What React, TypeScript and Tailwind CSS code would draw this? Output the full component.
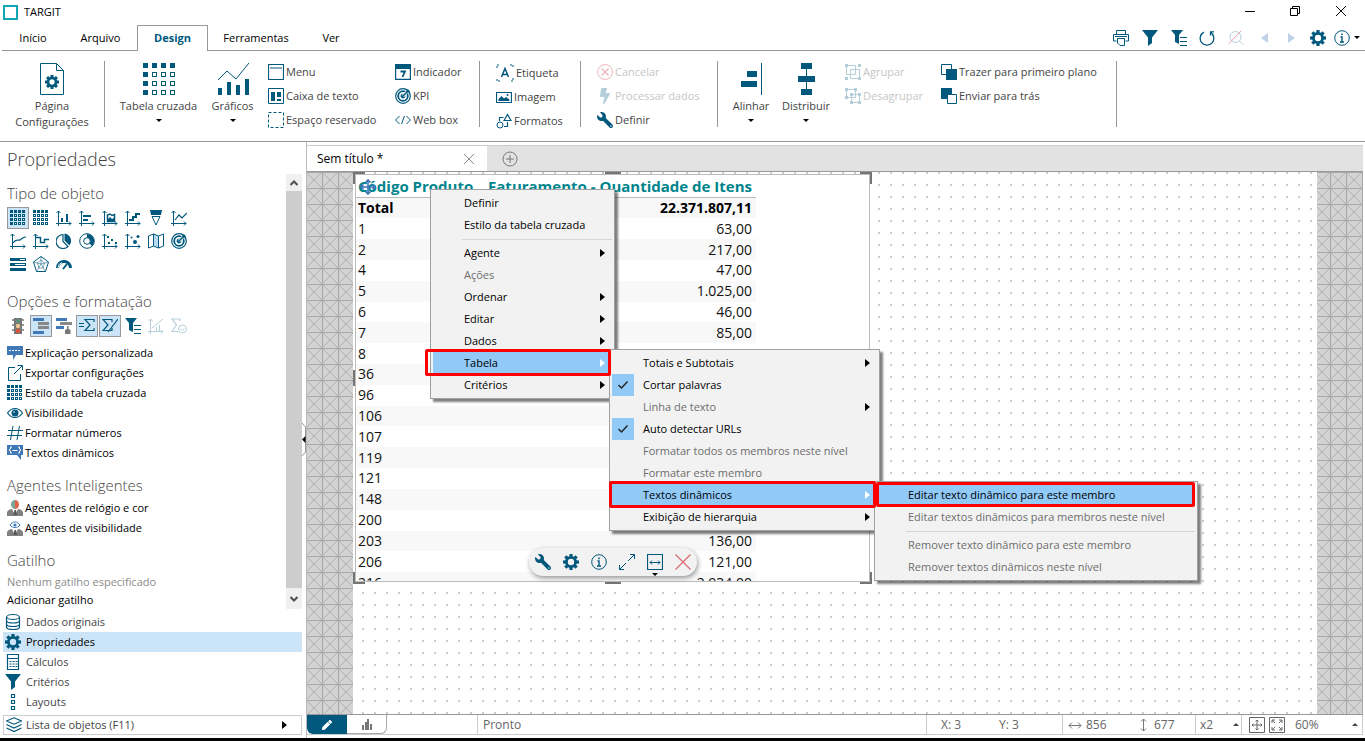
import { useState } from "react";
import type { ReactNode } from "react";
import { FaWrench, FaBolt, FaPen } from "react-icons/fa";

const BLUE = "#00587c";

function Svg({ children, size = 16, color = BLUE }: { children: ReactNode; size?: number; color?: string }) {
  return (
    <svg
      width={size}
      height={size}
      viewBox={`0 0 ${size} ${size}`}
      fill="none"
      stroke={color}
      strokeWidth="1"
      className="shrink-0"
      aria-hidden="true"
    >
      {children}
    </svg>
  );
}

function Gear({ size = 16, color = BLUE }: { size?: number; color?: string }) {
  return (
    <svg width={size} height={size} viewBox="-8 -8 16 16" fill={color} className="shrink-0" aria-hidden="true">
      <circle r="4.6" fill="none" stroke={color} strokeWidth="2.8" />
      {[0, 45, 90, 135, 180, 225, 270, 315].map((a) => (
        <rect key={a} x="-1.6" y="-8" width="3.2" height="3" transform={`rotate(${a})`} />
      ))}
    </svg>
  );
}

function GridIcon({ leftFilled = true }: { leftFilled?: boolean }) {
  return (
    <Svg>
      {[0, 1, 2, 3].map((r) =>
        [0, 1, 2, 3].map((c) => {
          const solid = r === 0 || (leftFilled && c === 0);
          return (
            <rect
              key={`${r}-${c}`}
              x={c * 4 + 0.5}
              y={r * 4 + 0.5}
              width="2"
              height="2"
              fill={solid ? BLUE : "none"}
            />
          );
        })
      )}
    </Svg>
  );
}

function BigGrid() {
  return (
    <Svg size={32}>
      {[0, 1, 2, 3].map((r) =>
        [0, 1, 2, 3].map((c) => (
          <rect
            key={`${r}-${c}`}
            x={c * 9 + 0.5}
            y={r * 9 + 0.5}
            width="4"
            height="4"
            fill={r === 0 || c === 0 ? BLUE : "none"}
          />
        ))
      )}
    </Svg>
  );
}

function Axes({ children }: { children: ReactNode }) {
  return (
    <Svg>
      <path d="M2.500 16V1M0.500 3l2-2 2 2M0 13.500h15M13 11.500l2 2-2 2" />
      {children}
    </Svg>
  );
}

function Filter() {
  return (
    <Svg>
      <path d="M0 0h16L10 7.500V13l-4 3V7.500z" fill={BLUE} stroke="none" />
    </Svg>
  );
}

function FilterLines() {
  return (
    <Svg>
      <path d="M0 0h12L8 5v9l-4-2V5z" fill={BLUE} stroke="none" />
      <path d="M9 7.500h7M9 11.500h7M9 15.500h7" />
    </Svg>
  );
}

function Target() {
  return (
    <Svg>
      <circle cx="8" cy="8" r="7.300" strokeWidth="1.200" />
      <circle cx="8" cy="8" r="4.800" strokeWidth="1.800" />
      <circle cx="8" cy="8" r="2" fill={BLUE} />
      <path d="M8 8l7-7" stroke="#fff" strokeWidth="3" />
      <path d="M8 8l6-6M12 1v3h3" strokeWidth="1.500" />
    </Svg>
  );
}

function Info({ size = 16 }: { size?: number }) {
  return (
    <svg width={size} height={size} viewBox="0 0 16 16" fill="none" stroke={BLUE} className="shrink-0" aria-hidden="true">
      <circle cx="8" cy="8" r="7.300" />
      <path d="M8 3.500v1.800M6.500 7H8v5M6 12h4" strokeWidth="1.400" />
    </svg>
  );
}

function Sigma({ shift = 0 }: { shift?: number }) {
  return <path d={`M${10 + shift} 4V1.500H${shift + 1}L${6 + shift} 7l-5 5.500h9V10`} strokeWidth="1.200" />;
}

function Caret({ up = false }: { up?: boolean }) {
  return (
    <svg width="6" height="3" viewBox="0 0 6 3" className="shrink-0" aria-hidden="true">
      <path d={up ? "M0 3h6L3 0z" : "M0 0h6L3 3z"} fill={up ? "#444" : "#000"} />
    </svg>
  );
}

function RightArrow({ color = "#000" }: { color?: string }) {
  return (
    <svg width="5" height="8" viewBox="0 0 5 8" className="shrink-0" aria-hidden="true">
      <path d="M0 0v8l5-4z" fill={color} />
    </svg>
  );
}

const tabs = ["Início", "Arquivo", "Design", "Ferramentas", "Ver"];
const tabWidths = ["w-[62px]", "w-[73px]", "w-[71px]", "w-[96px]", "w-[54px]"];

function TitleBar() {
  return (
    <header className="flex h-[25px] shrink-0 items-center justify-between pr-px pl-[3px]">
      <div className="flex items-center gap-1.5">
        <span className="size-[15px] border-2 border-[#12a5b5]" />
        <h1 className="text-[11px]">TARGIT</h1>
      </div>
      <div className="flex items-center pb-1 text-black">
        <button aria-label="Minimizar" className="flex h-5 w-[45px] items-center justify-center">
          <Svg size={10} color="#000"><path d="M0 5.500h10" /></Svg>
        </button>
        <button aria-label="Restaurar" className="flex h-5 w-[45px] items-center justify-center">
          <Svg size={10} color="#000"><path d="M0.500 2.500h7v7h-7zM2.500 2V0.500h7v7H8" /></Svg>
        </button>
        <button aria-label="Fechar" className="flex h-5 w-[47px] items-center justify-center">
          <Svg size={10} color="#000"><path d="M0 0l10 10M10 0L0 10" /></Svg>
        </button>
      </div>
    </header>
  );
}

const quickTools: [string, string, ReactNode][] = [
  ["Imprimir", "w-[29px]", <Svg key="i"><path d="M3.500 4V0.500h9V4M3.500 11h-3V4.500h15V11h-3M4.500 8.500h7v7H7l-2.500-2.500zM2 6.500h12" /></Svg>],
  ["Filtrar", "w-[29px]", <Filter key="i" />],
  ["Critérios", "w-[29px]", <FilterLines key="i" />],
  ["Atualizar", "w-[28px]", <Svg key="i"><path d="M11 2.200a6.800 6.800 0 1 1-6 0M11.500 5.500V1.800h3.500" strokeWidth="1.300" /></Svg>],
  ["Localizar", "w-[30px]", <Svg key="i" color="#b5cfda"><circle cx="7.500" cy="7" r="5.500" /><path d="M11.500 11l4 4" /><path d="M0.500 14L13 1" stroke="#ee9fae" /></Svg>],
  ["Voltar", "w-[27px]", <Svg key="i"><path d="M11 3v10L4 8z" fill="#bfd2e8" stroke="none" /></Svg>],
  ["Avançar", "w-[26px]", <Svg key="i"><path d="M5 3v10l7-5z" fill="#bfd2e8" stroke="none" /></Svg>],
  ["Opções", "w-[28px]", <Gear key="i" />],
  ["Informação", "w-[20px]", <Info key="i" />],
];

function TabBar() {
  return (
    <nav className="flex h-[26px] shrink-0 pl-0.5 text-[11px] text-black">
      <div className="flex">
        {tabs.map((t, i) => (
          <button
            key={t}
            className={`${tabWidths[i]} ${
              t === "Design"
                ? "border border-b-0 border-[#999] font-bold text-[#00587c]"
                : "border-b border-[#999] pt-0.5"
            }`}
          >
            {t}
          </button>
        ))}
      </div>
      <div className="flex flex-1 items-center justify-end border-b border-[#999] pr-[5px]">
        {quickTools.map(([label, width, icon]) => (
          <button key={label} aria-label={label} className={`flex justify-center ${width}`}>
            {icon}
          </button>
        ))}
        <span className="pl-0.5"><Caret /></span>
      </div>
    </nav>
  );
}

function Separator() {
  return <div className="mt-px h-[66px] w-px shrink-0 bg-[#999]" />;
}

function BigButton({ icon, label, width, caret = true }: { icon: ReactNode; label: string; width: string; caret?: boolean }) {
  return (
    <button className={`flex shrink-0 flex-col items-center pt-[3px] leading-4 ${width}`}>
      {icon}
      <span className="mt-[3px] whitespace-pre-line">{label}</span>
      {caret && <span className="mt-0.5 flex h-2 items-center"><Caret /></span>}
    </button>
  );
}

function RibbonColumn({ items, width }: { items: [string, ReactNode, boolean?][]; width: string }) {
  return (
    <div className={`shrink-0 ${width}`}>
      {items.map(([label, icon, disabled]) => (
        <button
          key={label}
          disabled={disabled}
          className="flex h-6 items-center gap-0.5 whitespace-nowrap disabled:text-[#c6c6c6]"
        >
          {icon}
          {label}
        </button>
      ))}
    </div>
  );
}

function Ribbon() {
  return (
    <section className="flex h-[91px] shrink-0 overflow-hidden border-b border-[#999] pt-[9px] text-[11px] text-[#444]">
      <BigButton
        width="w-[104px]"
        caret={false}
        label={"Página\nConfigurações"}
        icon={
          <Svg size={32}>
            <path d="M4.500 0.500h16l7 7v24h-23zM20.500 0.500v7h7" />
            <g transform="translate(16 19)" fill={BLUE} stroke="none">
              <circle r="4" fill="none" stroke={BLUE} strokeWidth="2.600" />
              {[0, 45, 90, 135, 180, 225, 270, 315].map((a) => (
                <rect key={a} x="-1.500" y="-7" width="3" height="3" transform={`rotate(${a})`} />
              ))}
            </g>
          </Svg>
        }
      />
      <Separator />
      <BigButton width="w-[107px]" label="Tabela cruzada" icon={<BigGrid />} />
      <BigButton
        width="w-[41px]"
        label="Gráficos"
        icon={
          <Svg size={32}>
            <path d="M1 17l9-9 9 8L32 0" />
            <path d="M1 25h4v7H1zM10 19h4v13h-4zM19 22h4v10h-4zM28 16h4v16h-4z" fill={BLUE} stroke="none" />
          </Svg>
        }
      />
      <RibbonColumn
        width="ml-[15px] w-[127px]"
        items={[
          ["Menu", <Svg key="i"><path d="M0.500 0.500h15v15h-15zM2 4h12" strokeWidth="1.200" /></Svg>],
          ["Caixa de texto", <Svg key="i"><path d="M0.500 0.500h15v15h-15z" /><path d="M3 4h4v9H3zM9 4h4v5H9zM9 11h4v2H9z" fill={BLUE} stroke="none" /></Svg>],
          ["Espaço reservado", <Svg key="i"><path d="M0.500 0.500h15v15h-15z" strokeDasharray="3 2" /></Svg>],
        ]}
      />
      <RibbonColumn
        width="w-[84px]"
        items={[
          ["Indicador", <Svg key="i"><path d="M0.500 0.500h15v15h-15z" strokeWidth="1.400" /><path d="M0 0h16v5H0z" fill={BLUE} stroke="none" /><path d="M5.500 7.500H10L7.500 13" strokeWidth="1.800" /></Svg>],
          ["KPI", <Target key="i" />],
          ["Web box", <Svg key="i"><path d="M4.500 4L0.500 8l4 4M11.500 4l4 4-4 4M9.500 4l-3 8" /></Svg>],
        ]}
      />
      <Separator />
      <RibbonColumn
        width="mt-px ml-4 w-[84px]"
        items={[
          ["Etiqueta", <Svg key="i" size={18}><path d="M1 4V1h3M14 1h3v3M17 14v3h-3M4 17H1v-3" strokeDasharray="2 1" /><path d="M5.500 13L9 4.500l3.500 8.500M6.500 10.500h5" strokeWidth="1.500" /></Svg>],
          ["Imagem", <Svg key="i"><path d="M0.500 3.500h15v10h-15z" strokeWidth="1.200" /><path d="M2.500 12V10l3-3 2.500 2.500L10 8l3.500 2.500V12z" fill={BLUE} stroke="none" /><circle cx="11.500" cy="6" r="1" fill={BLUE} stroke="none" /></Svg>],
          ["Formatos", <Svg key="i"><circle cx="4" cy="12" r="3" /><path d="M3.500 8V4.500h4M11.500 9v4.500H8M8 7.500L11.500 1.500l3.500 6z" strokeWidth="1.200" /></Svg>],
        ]}
      />
      <Separator />
      <RibbonColumn
        width="ml-4 w-[120px]"
        items={[
          ["Cancelar", <Svg key="i" color="#eeb6ba"><circle cx="8" cy="8" r="7.400" /><path d="M4.500 4.500l7 7M11.500 4.500l-7 7" strokeWidth="1.400" /></Svg>, true],
          ["Processar dados", <FaBolt key="i" className="size-4 text-[#b5cfda]" />, true],
          ["Definir", <FaWrench key="i" className="size-4 -scale-x-100 text-[#00587c]" />],
        ]}
      />
      <Separator />
      <BigButton
        width="ml-1 w-[58px]"
        label="Alinhar"
        icon={<Svg size={32}><path d="M12 8h10v6H12zM6 18h16v6H6z" fill={BLUE} stroke="none" /><path d="M26.500 0v32" /></Svg>}
      />
      <BigButton
        width="w-[52px]"
        label="Distribuir"
        icon={<Svg size={32}><path d="M16.500 0v32" /><path d="M11 0h11v6H11zM8 13h17v6H8zM11 26h11v6H11z" fill={BLUE} stroke="none" /></Svg>}
      />
      <RibbonColumn
        width="ml-[13px] w-24"
        items={[
          ["Agrupar", <Svg key="i" color="#b5cfda"><path d="M1.500 1.500h9v9h-9zM5.500 5.500h9v9h-9z" /><path d="M0 0h3v3H0zM13 0h3v3h-3zM0 13h3v3H0zM13 13h3v3h-3z" fill="#b5cfda" stroke="none" /></Svg>, true],
          ["Desagrupar", <Svg key="i" color="#b5cfda"><path d="M1.500 1.500h9v8h-9zM6.500 6.500h8v8h-8z" /><path d="M0 0h3v3H0zM9 0h3v3H9zM0 8h3v3H0zM5 5h3v3H5zM13 5h3v3h-3zM5 13h3v3H5zM13 13h3v3h-3z" fill="#b5cfda" stroke="none" /></Svg>, true],
        ]}
      />
      <RibbonColumn
        width="w-[175px]"
        items={[
          ["Trazer para primeiro plano", <Svg key="i"><path d="M0.500 0.500h10v10h-10z" /><path d="M5 5h11v11H5z" fill={BLUE} stroke="none" /></Svg>],
          ["Enviar para trás", <Svg key="i"><path d="M0 0h11v11H0z" fill={BLUE} stroke="none" /><path d="M6.500 6.500h9v9h-9z" fill="#fff" /></Svg>],
        ]}
      />
      <Separator />
    </section>
  );
}

const objectTypes: [string, ReactNode][] = [
  ["Tabela cruzada", <GridIcon key="i" />],
  ["Tabela", <GridIcon key="i" leftFilled={false} />],
  ["Colunas", <Axes key="i"><path d="M6 12V8M11 12V4" strokeWidth="2" /></Axes>],
  ["Barras", <Axes key="i"><path d="M4 6h8M4 10h5" strokeWidth="2" /></Axes>],
  ["Área", <Axes key="i"><path d="M5.500 11.500V5l2.500-1 2 1.500 2.500-1v7z" strokeWidth="1.500" /><path d="M6 9l2-2 2 2 2-1v3H6z" fill={BLUE} stroke="none" /></Axes>],
  ["Cascata", <Axes key="i"><path d="M4 10h4V7h3V4h4" strokeWidth="2" /></Axes>],
  ["Funil", <Svg key="i"><path d="M2 0h12l-1 5H3z" fill={BLUE} stroke="none" /><path d="M4 6.500h8L8 15z" /></Svg>],
  ["Linhas", <Axes key="i"><path d="M4 10l4-5 3 3 5-5" strokeWidth="1.200" /></Axes>],
  ["Curvas", <Axes key="i"><path d="M3 10c3-5 5-2 7-3s2-3 6-3" strokeWidth="1.200" /></Axes>],
  ["Degraus", <Axes key="i"><path d="M3 4.500h4.500v5h4v-3H16" strokeWidth="1.400" /></Axes>],
  ["Pizza", <Svg key="i"><path d="M7 1.500a7 7 0 1 0 5 12L7 8.500z" strokeWidth="1.200" /><path d="M8.500 0.500A7.500 7.500 0 0 1 13.500 12.500L8.500 7.500z" fill={BLUE} stroke="none" /></Svg>],
  ["Rosca", <Svg key="i"><circle cx="8" cy="8" r="7.300" /><circle cx="8" cy="8" r="3.300" /><path d="M8 2.700A5.300 5.300 0 0 1 11.700 11.700" strokeWidth="3.500" /></Svg>],
  ["Dispersão", <Axes key="i"><path d="M5 3h2v2H5zM9 6h2v2H9zM6 9h2v2H6zM13 9h2v2h-2z" fill={BLUE} stroke="none" /></Axes>],
  ["Bolhas", <Axes key="i"><circle cx="10" cy="9" r="2" fill={BLUE} stroke="none" /><circle cx="6.500" cy="4.500" r="1" fill={BLUE} stroke="none" /><circle cx="13" cy="3.500" r="1.500" fill={BLUE} stroke="none" /></Axes>],
  ["Mapa", <Svg key="i"><path d="M5.500 1l5 2v12l-5-2z" fill="#b9daf3" stroke="none" /><path d="M0.500 3l5-2 5 2 5-2v12l-5 2-5-2-5 2zM5.500 1v12M10.500 3v12" /></Svg>],
  ["Medidor", <Target key="i" />],
  ["Barras de progresso", <Svg key="i"><path d="M0 2h16v3H0zM0 7h16v3H0zM0 12h16v3H0z" fill={BLUE} stroke="none" /><path d="M10 3.500h5M5 8.500h10" stroke="#fff" /></Svg>],
  ["Radar", <Svg key="i"><path d="M8 0.500l7.500 5.500-3 9.500h-9L0.500 6z" /><path d="M8 4l3.500 3-1.500 5H6L4.500 7zM8 0.500V8M15.500 6L8 8l4.500 7.500M3.500 15.500L8 8 0.500 6" strokeWidth="0.500" /></Svg>],
  ["Velocímetro", <Svg key="i"><path d="M1.500 12a6.500 6.500 0 0 1 13 0" strokeWidth="3" /><path d="M2 11.500A6 6 0 0 1 6 6.500" stroke="#fff" /><path d="M7 13l4-5" strokeWidth="2" /></Svg>],
];

const formatOptions: [string, ReactNode][] = [
  ["Semáforo", <Svg key="i"><path d="M4 0h8v16H4z" fill="#777" stroke="none" /><path d="M2 2h12M2 7h12M2 12h12" stroke="#777" strokeWidth="1.500" /><circle cx="8" cy="3" r="2" fill="#5f8f80" stroke="none" /><circle cx="8" cy="8" r="2.200" fill="#f0c690" stroke="none" /><circle cx="8" cy="13" r="2.200" fill="#e0533c" stroke="none" /></Svg>],
  ["Recuar", <Svg key="i"><path d="M0 1.500h11M0 14.500h11" stroke="#4078b8" strokeWidth="3" /><path d="M5 5.500h11M5 9.500h11" stroke="#888" strokeWidth="3" /></Svg>],
  ["Agrupar níveis", <Svg key="i"><path d="M0 1.500h11" stroke="#4078b8" strokeWidth="3" /><path d="M4 5.500h12" stroke="#888" strokeWidth="3" /><path d="M0 9.500h8" stroke="#4078b8" strokeWidth="3" /><path d="M9 16v-4l2-1V8h1.500v3l2 1v4z" fill="#777" stroke="none" /></Svg>],
  ["Totais", <Svg key="i"><path d="M0 5.500h5M0 8.500h5" /><Sigma shift={5} /></Svg>],
  ["Subtotais", <Svg key="i"><Sigma /><path d="M16 1L6 14" strokeWidth="1.200" /></Svg>],
  ["Critérios", <FilterLines key="i" />],
  ["Tendência", <Svg key="i" color="#b5cfda"><path d="M2.500 16V1M0.500 3l2-2 2 2M0 13.500h15M13 11.500l2 2-2 2M4 10l11-9M8.500 13V9M11.500 13V7" /></Svg>],
  ["Soma acumulada", <Svg key="i" color="#b5cfda"><path d="M9 3V1H1l4.500 6L1 13.500h6" strokeWidth="1.200" /><circle cx="11.500" cy="11" r="4" /><path d="M9.500 10.500l2 2 2-2" /></Svg>],
];

function Agent({ children }: { children: ReactNode }) {
  return (
    <Svg>
      <path d="M0 16v-4c1-2 3-3 5-3l3 6 3-6c2 0 4 1 5 3v4z" fill="#808080" stroke="none" />
      <path d="M7.500 10h1.500l1 5H6.500z" fill="#555" stroke="none" />
      {children}
    </Svg>
  );
}

const actions: [string, ReactNode][] = [
  ["Explicação personalizada", <Svg key="i"><path d="M0 1h16v9H9l-3 5v-5H0z" fill="#4078b8" stroke="none" /><path d="M2 5.500h12" stroke="#fff" strokeDasharray="2 1" /></Svg>],
  ["Exportar configurações", <Svg key="i"><path d="M8 2.500H1.500v13h12V9M7 9l8-8M10.500 0.500H15.500V5" /></Svg>],
  ["Estilo da tabela cruzada", <GridIcon key="i" />],
  ["Visibilidade", <Svg key="i"><path d="M0.500 8c4-6 11-6 15 0-4 6-11 6-15 0z" strokeWidth="1.200" /><circle cx="8" cy="8" r="3.500" fill={BLUE} stroke="none" /><circle cx="7" cy="7" r="0.800" fill="#fff" stroke="none" /></Svg>],
  ["Formatar números", <Svg key="i"><path d="M6 1L3.500 15M12.500 1L10 15M1 5.500h15M0 10.500h15" /></Svg>],
  ["Textos dinâmicos", <Svg key="i"><path d="M0 0h16v10h-2v5l-4-5H0z" fill="#4078b8" stroke="none" /><path d="M5 2H3.500v2L2 5l1.500 1v2H5M11 2h1.500v2L14 5l-1.500 1v2H11M5.500 5.500h5" stroke="#fff" /></Svg>],
];

const agents: [string, ReactNode][] = [
  ["Agentes de relógio e cor", <Agent key="i"><path d="M8 0v9a4 4.500 0 0 1 0-9z" fill="#79a898" stroke="none" /><path d="M8 0v9a4 4.500 0 0 0 0-9z" fill="#e0634c" stroke="none" /></Agent>],
  ["Agentes de visibilidade", <Agent key="i"><path d="M3 5c2.500-4 7.500-4 10 0-2.500 3.500-7.500 3.500-10 0z" fill="#fff" stroke="#4078b8" /><circle cx="8" cy="5" r="1.600" fill="#4078b8" stroke="none" /></Agent>],
];

const panels: [string, ReactNode][] = [
  ["Dados originais", <Svg key="i"><ellipse cx="8" cy="3" rx="6.500" ry="2.500" /><path d="M1.500 3v10c0 3.300 13 3.300 13 0V3M1.500 6.500c0 3.300 13 3.300 13 0M1.500 10c0 3.300 13 3.300 13 0" strokeWidth="1.200" /></Svg>],
  ["Propriedades", <Gear key="i" />],
  ["Cálculos", <Svg key="i"><path d="M2.500 0.500h11v15h-11zM2.500 4.500h11" strokeWidth="1.200" /><path d="M4.500 7.500h8M4.500 10h8M4.500 12.500h8" strokeDasharray="2 1" /></Svg>],
  ["Critérios", <Filter key="i" />],
  ["Layouts", <Svg key="i"><path d="M6.500 0.500h3v3h-3zM6.500 6.500h3v3h-3zM6.500 12.500h3v3h-3z" strokeWidth="1.200" /></Svg>],
];

function IconGrid({ items, active }: { items: [string, ReactNode][]; active: number[] }) {
  return (
    <div className="mt-0.5 grid w-[184px] grid-cols-8">
      {items.map(([label, icon], i) => (
        <div key={label} className="size-[23px]">
          <button
            aria-label={label}
            aria-pressed={active.includes(i)}
            className={`flex size-[22px] items-center justify-center border ${
              active.includes(i) ? "border-[#999] bg-[#cce4f7]" : "border-transparent"
            }`}
          >
            {icon}
          </button>
        </div>
      ))}
    </div>
  );
}

function ActionList({ items }: { items: [string, ReactNode][] }) {
  return (
    <>
      {items.map(([label, icon]) => (
        <button key={label} className="flex h-5 items-center gap-0.5 text-[11px] text-black">
          {icon}
          {label}
        </button>
      ))}
    </>
  );
}

function Sidebar() {
  const [panel, setPanel] = useState("Propriedades");

  return (
    <aside className="relative flex w-[306px] shrink-0 flex-col pb-[3px] text-[#444]">
      <h2 className="flex h-8 shrink-0 items-center pt-0.5 pl-[7px] text-lg font-light">Propriedades</h2>
      <div className="mr-1 flex min-h-0 flex-1 basis-0 overflow-hidden">
        <div className="flex-1 pt-[7px] pl-[7px]">
          <h3 className="h-6 text-[15px] leading-6 font-light">Tipo de objeto</h3>
          <IconGrid items={objectTypes} active={[0]} />
          <h3 className="mt-[13px] h-6 text-[15px] leading-6 font-light">Opções e formatação</h3>
          <IconGrid items={formatOptions} active={[1, 3, 4]} />
          <div className="mt-[5px]">
            <ActionList items={actions} />
          </div>
          <h3 className="mt-2.5 mb-px h-6 text-[15px] leading-6 font-light">Agentes Inteligentes</h3>
          <ActionList items={agents} />
          <h3 className="mt-2.5 h-6 text-[15px] leading-6 font-light">Gatilho</h3>
          <p className="h-[19px] text-[11px] leading-5 text-[#8c8c8c]">Nenhum gatilho especificado</p>
          <button className="block h-[18px] text-[11px] text-black">Adicionar gatilho</button>
        </div>
        <div className="flex w-4 flex-col bg-[#cdcdcd]">
          <button aria-label="Rolar para cima" className="flex h-[17px] items-center justify-center bg-[#f0f0f0]">
            <Svg size={8} color="#505050"><path d="M0.500 6L4 2.500 7.500 6" strokeWidth="2" /></Svg>
          </button>
          <div className="flex-1" />
          <button aria-label="Rolar para baixo" className="flex h-[21px] items-center justify-center bg-[#f0f0f0]">
            <Svg size={8} color="#505050"><path d="M0.500 2L4 5.500 7.500 2" strokeWidth="2" /></Svg>
          </button>
        </div>
      </div>
      <div className="mt-[3px] mr-1 ml-[3px] flex flex-col">
        {panels.map(([label, icon]) => (
          <button
            key={label}
            onClick={() => setPanel(label)}
            className={`flex h-5 items-center gap-[5px] pl-0.5 text-[11px] ${panel === label ? "bg-[#cce4f7] text-black" : ""}`}
          >
            {icon}
            {label}
          </button>
        ))}
      </div>
      <button className="mt-[3px] mr-1 ml-[3px] flex h-5 items-center gap-1 border border-[#ccc] pr-3.5 pl-0.5 text-[11px]">
        <Svg>
          <path d="M0.500 4L8 0.800 15.500 4 8 7.200zM0.500 7.500L8 11l7.500-3.500M0.500 11L8 14.500l7.500-3.500" strokeWidth="1.200" />
        </Svg>
        <span className="flex-1 text-left">Lista de objetos (F11)</span>
        <RightArrow />
      </button>
      <button aria-label="Recolher painel" className="absolute top-[281px] right-0 h-[33px] w-1">
        <svg width="4" height="33" viewBox="0 0 4 33" fill="none" stroke="#999" aria-hidden="true">
          <path d="M0 0l3.500 4v25L0 33" />
          <path d="M3.500 13v7L0 16.500z" fill="#000" stroke="none" />
        </svg>
      </button>
    </aside>
  );
}

const rows: [string, string][] = [
  ["1", "63,00"],
  ["2", "217,00"],
  ["4", "47,00"],
  ["5", "1.025,00"],
  ["6", "46,00"],
  ["7", "85,00"],
  ["8", ""],
  ["36", ""],
  ["96", ""],
  ["106", ""],
  ["107", ""],
  ["119", ""],
  ["121", ""],
  ["148", ""],
  ["200", ""],
  ["203", "136,00"],
  ["206", "121,00"],
  ["216", "2.934,00"],
];

// Selection handles around the crosstab, clockwise from the top left corner
const handles = [
  "top-0 left-0 h-3 w-3 border-t-2 border-l-2",
  "top-0 left-[252px] h-0.5 w-4 border-t-2",
  "top-0 right-0 h-3 w-3 border-t-2 border-r-2",
  "top-[198px] left-0 h-4 w-0.5 border-l-2",
  "bottom-0 left-0 h-3 w-3 border-b-2 border-l-2",
  "bottom-0 left-[252px] h-0.5 w-4 border-b-2",
  "right-0 bottom-0 h-3 w-3 border-r-2 border-b-2",
];

function Crosstab() {
  return (
    <div className="absolute top-0 left-[46px] h-[412px] w-[519px] p-0.5">
      <div className="h-full overflow-hidden border border-[#bbb] bg-white">
        <table className="h-[418px] w-[400px] border-collapse text-sm text-[#111]">
          <thead>
            <tr className="h-[22px] text-[15px] text-[#00848c]">
              <th className="w-[120px] border-b border-[#bbb] p-0 pl-0.5 text-left leading-5 font-bold whitespace-nowrap">Código Produto</th>
              <th className="border-b border-[#bbb] p-0 pr-1 text-right leading-5 font-bold whitespace-nowrap">
                Faturamento - Quantidade de Itens
              </th>
            </tr>
          </thead>
          <tbody>
            <tr className="bg-[#f8f8f8] font-bold text-black">
              <td className="p-0 pl-0.5 leading-5">Total</td>
              <td className="p-0 pr-1 text-right leading-5">22.371.807,11</td>
            </tr>
            {rows.map(([code, qty]) => (
              <tr key={code} className="even:bg-white odd:bg-[#f8f8f8]">
                <td className="p-0 pl-0.5 leading-5">{code}</td>
                <td className="p-0 pr-1 text-right leading-5">{qty}</td>
              </tr>
            ))}
          </tbody>
        </table>
      </div>
      {handles.map((h) => (
        <span key={h} className={`absolute border-[#757575] ${h}`} />
      ))}
      <span className="absolute top-[7px] left-[7px]">
        <Svg color="#4272b8">
          <path d="M8 1v14M1 8h14M5.500 3.500L8 1l2.500 2.500M5.500 12.500L8 15l2.500-2.500M3.500 5.500L1 8l2.500 2.500M12.500 5.500L15 8l-2.500 2.500" strokeWidth="1.600" />
        </Svg>
      </span>
    </div>
  );
}

type MenuEntry = { label: string; sub?: boolean; disabled?: boolean; checked?: boolean; active?: boolean } | null;

const contextMenu: MenuEntry[] = [
  { label: "Definir" },
  { label: "Estilo da tabela cruzada" },
  null,
  { label: "Agente", sub: true },
  { label: "Ações", disabled: true },
  { label: "Ordenar", sub: true },
  { label: "Editar", sub: true },
  { label: "Dados", sub: true },
  { label: "Tabela", sub: true, active: true },
  { label: "Critérios", sub: true },
];

const tableMenu: MenuEntry[] = [
  { label: "Totais e Subtotais", sub: true },
  { label: "Cortar palavras", checked: true },
  { label: "Linha de texto", sub: true, disabled: true },
  { label: "Auto detectar URLs", checked: true },
  { label: "Formatar todos os membros neste nível", disabled: true },
  { label: "Formatar este membro", disabled: true },
  { label: "Textos dinâmicos", sub: true, active: true },
  { label: "Exibição de hierarquia", sub: true },
];

const textMenu: MenuEntry[] = [
  { label: "Editar texto dinâmico para este membro", active: true },
  { label: "Editar textos dinâmicos para membros neste nível", disabled: true },
  null,
  { label: "Remover texto dinâmico para este membro", disabled: true },
  { label: "Remover textos dinâmicos neste nível", disabled: true },
];

function Menu({ entries, place }: { entries: MenuEntry[]; place: string }) {
  return (
    <div
      role="menu"
      className={`absolute border border-[#a0a0a0] bg-[#f2f2f2] p-0.5 text-[11px] shadow-[3px_3px_2px_rgba(0,0,0,0.5)] ${place}`}
    >
      {entries.map((e, i) =>
        e === null ? (
          <div key={i} className="ml-[29px] flex h-1.5 items-center">
            <div className="h-px flex-1 bg-[#d5d5d5]" />
          </div>
        ) : (
          <button
            key={i}
            role={e.checked ? "menuitemcheckbox" : "menuitem"}
            aria-checked={e.checked}
            disabled={e.disabled}
            className={`flex h-[22px] w-full items-center pr-[7px] text-left whitespace-nowrap text-black disabled:text-[#6d6d6d] ${
              e.active ? "bg-[#91c9f7]" : ""
            }`}
          >
            <span className={`mr-[9px] flex size-[22px] items-center justify-center ${e.checked ? "bg-[#91c9f7]" : ""}`}>
              {e.checked && <Svg size={10} color="#222"><path d="M0.500 5l3 3L9.500 1.500" strokeWidth="1.400" /></Svg>}
            </span>
            <span className="flex-1">{e.label}</span>
            {e.sub && <RightArrow color={e.active ? "#fff" : "#000"} />}
          </button>
        )
      )}
    </div>
  );
}

const objectTools: [string, ReactNode][] = [
  ["Definir", <FaWrench key="i" className="size-4 -scale-x-100 text-[#00587c]" />],
  ["Propriedades", <Gear key="i" />],
  ["Informação", <Info key="i" />],
  ["Maximizar", <Svg key="i"><path d="M9 7l6.500-6.500M11 0.500h4.500V5M7 9L0.500 15.500M0.500 11v4.500H5" /></Svg>],
  ["Ajustar largura", <Svg key="i"><path d="M0.500 0.500h15v15h-15z" strokeWidth="1.200" /><path d="M3 8.500h10M5 6.500L3 8.500l2 2M11 6.500l2 2-2 2" /></Svg>],
  ["Excluir", <Svg key="i" color="#d9686f"><path d="M0.500 0.500l15 15M15.500 0.500l-15 15" strokeWidth="1.200" /></Svg>],
];

function Canvas() {
  return (
    <div className="relative flex min-h-0 flex-1 overflow-hidden bg-[#d3d3d3]">
      <svg className="absolute inset-0 h-full w-full" aria-hidden="true">
        <defs>
          <pattern id="hatch" width="16" height="16" x="-1" patternUnits="userSpaceOnUse">
            <path d="M0 0l16 16M16 0L0 16" stroke="#b2b2b2" />
            <path d="M0.500 0v16M0 0.500h16" stroke="#a8a8a8" />
          </pattern>
          <pattern id="dots" width="12" height="12" x="57" y="0" patternUnits="userSpaceOnUse">
            <rect width="2" height="2" fill="#cbcbcb" />
          </pattern>
        </defs>
        <rect width="100%" height="100%" fill="url(#hatch)" />
      </svg>
      <div className="relative mr-[46px] ml-[46px] flex-1 bg-white">
        <svg className="h-full w-full" aria-hidden="true">
          <rect x="-46" width="110%" height="100%" fill="url(#dots)" />
        </svg>
      </div>
      <Crosstab />
      <div className="absolute top-[376px] left-[222px] flex h-7 rounded-full bg-[#f2f2f2] shadow-[1px_2px_5px_rgba(0,0,0,0.4)]">
        {objectTools.map(([label, icon]) => (
          <button key={label} aria-label={label} className="relative flex w-7 items-center justify-center">
            {icon}
            {label === "Ajustar largura" && <span className="absolute bottom-0 flex"><Caret /></span>}
          </button>
        ))}
      </div>
      <Menu entries={contextMenu} place="top-[17px] left-[123px] w-[185px]" />
      <Menu entries={tableMenu} place="top-[177px] left-[302px] w-[271px]" />
      <Menu entries={textMenu} place="top-[309px] left-[567px] w-[324px]" />
      <span className="absolute top-[177px] left-[118px] h-[27px] w-[186px] rounded-xs border-3 border-[#ff0000]" />
      <span className="absolute top-[309px] left-[302px] h-[27px] w-[267px] rounded-xs border-3 border-[#ff0000]" />
      <span className="absolute top-[310px] left-[569px] h-[25px] w-[319px] rounded-xs border-3 border-[#ff0000]" />
    </div>
  );
}

function StatusBar() {
  return (
    <footer className="mb-[3px] flex h-[21px] shrink-0 items-stretch border-t border-b border-t-[#999] border-b-[#ccc] text-xs text-[#666]">
      <button aria-label="Modo de edição" className="flex w-10 items-center justify-center rounded-bl-md bg-[#00587c] text-white">
        <FaPen className="size-2.5" />
      </button>
      <button aria-label="Modo de visualização" className="flex w-10 items-center justify-center rounded-br-md border-r border-b border-[#aaa]">
        <Svg size={12}>
          <path d="M1 7h2v5H1zM4 4h2v8H4zM6 1h2v11H6zM9 6h2v6H9z" fill="#777" stroke="none" />
        </Svg>
      </button>
      <p className="ml-[90px] flex flex-1 items-center border-l border-[#ccc] pl-[5px]">Pronto</p>
      <div className="flex w-[136px] items-center border-l border-[#ccc] pl-3.5">
        <span className="w-[58px]">X: 3</span>
        <span>Y: 3</span>
      </div>
      <div className="flex w-[133px] items-center gap-1 border-l border-[#ccc] pl-[5px]">
        <Svg size={14} color="#777"><path d="M1 7.500h12M4 4.500L1 7.500l3 3M10 4.500l3 3-3 3" /></Svg>
        <span className="w-[46px]">856</span>
        <Svg size={14} color="#777"><path d="M7.500 1v12M5 3.500L7.500 1 10 3.500M5 10.500L7.500 13l2.500-2.500" /></Svg>
        <span>677</span>
      </div>
      <label className="flex w-[46px] items-center border-l border-[#ccc] pr-0.5 pl-1">
        <select aria-label="Espaçamento da grade" className="min-w-0 flex-1 appearance-none outline-none">
          <option>x2</option>
        </select>
        <Caret up />
      </label>
      <div className="flex w-[122px] items-center gap-1 border-r border-l border-[#ccc] pr-1 pl-[7px]">
        <button aria-label="Centralizar">
          <Svg size={16} color="#666"><path d="M0.500 0.500h15v15h-15z" /><path d="M8 3v10M3 8h10M6.500 4.500L8 3l1.500 1.500M6.500 11.500L8 13l1.500-1.500M4.500 6.500L3 8l1.500 1.500M11.500 6.500L13 8l-1.500 1.500" /></Svg>
        </button>
        <button aria-label="Ajustar à janela">
          <Svg size={16} color="#666"><path d="M0.500 0.500h15v15h-15z" /><path d="M3 6V3h3M10 3h3v3M13 10v3h-3M6 13H3v-3M3 3l3 3M13 3l-3 3M13 13l-3-3M3 13l3-3" /></Svg>
        </button>
        <select aria-label="Zoom" className="ml-1.5 min-w-0 flex-1 appearance-none outline-none">
          <option>60%</option>
        </select>
        <Caret up />
      </div>
    </footer>
  );
}

export default function App() {
  return (
    <div className="flex h-screen flex-col overflow-hidden border-b-3 border-black bg-white font-['Open_Sans',sans-serif] text-black">
      <TitleBar />
      <TabBar />
      <Ribbon />
      <div className="flex min-h-0 flex-1">
        <Sidebar />
        <main className="mr-0.5 flex min-w-0 flex-1 flex-col border-l border-[#bbb] pt-[3px]">
          <div className="flex h-[27px] shrink-0 border-t border-b border-t-[#ccc] border-b-[#999] bg-[#e2e2e2] text-xs">
            <div className="flex w-[180px] items-center justify-between bg-white pr-3 pl-2.5">
              <span>Sem título *</span>
              <button aria-label="Fechar documento">
                <Svg size={12} color="#888"><path d="M1 1l10 10M11 1L1 11" /></Svg>
              </button>
            </div>
            <button aria-label="Novo documento" className="ml-[15px]">
              <Svg color="#777"><circle cx="8" cy="8" r="7" /><path d="M4 8h8M8 4v8" /></Svg>
            </button>
          </div>
          <Canvas />
          <StatusBar />
        </main>
      </div>
    </div>
  );
}
